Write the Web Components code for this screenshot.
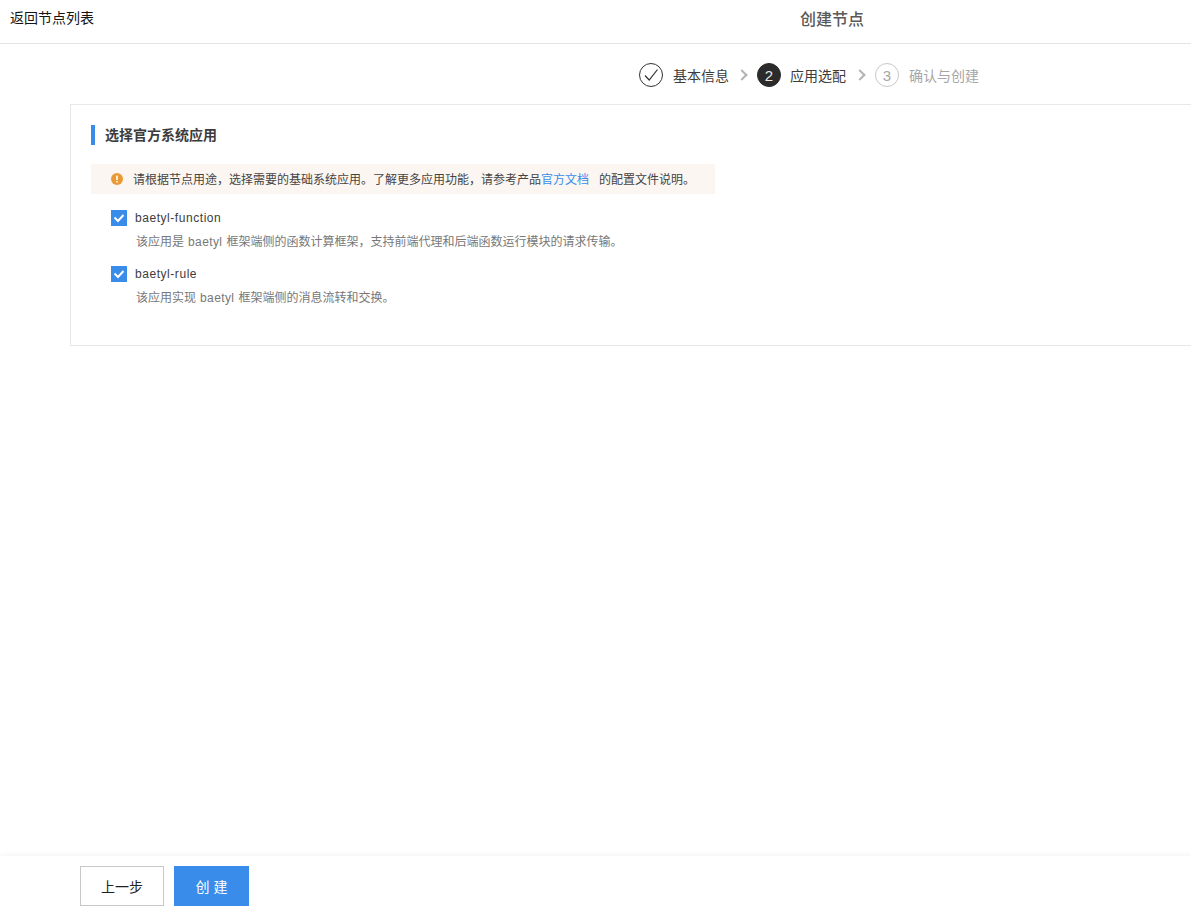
<!DOCTYPE html>
<html lang="zh">
<head>
<meta charset="utf-8">
<title>创建节点</title>
<style>
    html, body {
        margin: 0;
        height: 100%;
        overflow: hidden;
        background: #fff;
        font-family: "Liberation Sans", "Noto Sans CJK SC", sans-serif;
    }
</style>
</head>
<body>
<node-page>
    <page-header slot="header" back="返回节点列表" title-text="创建节点"></page-header>
    <step-bar slot="steps">
        <step-item state="done" label="基本信息"></step-item>
        <step-item state="active" num="2" label="应用选配"></step-item>
        <step-item state="todo" num="3" label="确认与创建"></step-item>
    </step-bar>
    <section-card slot="card" heading="选择官方系统应用">
        <notice-bar>请根据节点用途，选择需要的基础系统应用。了解更多应用功能，请参考产品<a>官方文档</a><span style="margin-left:10px">的配置文件说明。</span></notice-bar>
        <app-option name="baetyl-function">该应用是<b style="font-weight:400;letter-spacing:.4px;margin:0 4px">baetyl</b>框架端侧的函数计算框架，支持前端代理和后端函数运行模块的请求传输。</app-option>
        <app-option name="baetyl-rule">该应用实现<b style="font-weight:400;letter-spacing:.4px;margin:0 4px">baetyl</b>框架端侧的消息流转和交换。</app-option>
    </section-card>
    <page-footer slot="footer"></page-footer>
</node-page>

<script>
function defineEl(name, css, html, setup) {
    customElements.define(name, class extends HTMLElement {
        constructor() {
            super();
            this.attachShadow({ mode: 'open' });
            this.shadowRoot.innerHTML = `<style>${css}</style>${html}`;
        }
        connectedCallback() {
            if (setup) setup(this, this.shadowRoot);
        }
    });
}

defineEl('node-page', `
    :host { display: flex; flex-direction: column; height: 912px; width: 1191px; overflow: hidden; }
    .main { flex: 1; min-height: 0; }
`, `
    <slot name="header"></slot>
    <div class="main">
        <slot name="steps"></slot>
        <slot name="card"></slot>
    </div>
    <slot name="footer"></slot>
`);

defineEl('page-header', `
    :host { display: grid; grid-template-columns: 1fr auto 1fr; align-items: start; height: 43px; border-bottom: 1px solid #e4e4e4; box-sizing: content-box; }
    .back { padding: 10px 0 0 10px; font-size: 14px; line-height: 17px; color: #151515; }
    .title { padding: 10px 327px 0 0; grid-column: 3; text-align: right; font-size: 16px; line-height: 19px; font-weight: 500; color: #5a5a5a; white-space: nowrap; }
`, `
    <div class="back"></div>
    <div class="title"></div>
`, (el, root) => {
    root.querySelector('.back').textContent = el.getAttribute('back');
    root.querySelector('.title').textContent = el.getAttribute('title-text');
});

defineEl('step-bar', `
    :host { display: flex; justify-content: flex-end; align-items: center; height: 58px; padding: 2px 212px 0 0; }
`, `<slot></slot>`);

defineEl('step-item', `
    :host { display: flex; align-items: center; font-size: 14px; color: #3c3c3c; }
    :host(:not(:first-child))::before {
        content: "";
        width: 6px; height: 6px;
        margin: 0 11px 0 9px;
        border-top: 2px solid #b4b4b4;
        border-right: 2px solid #b4b4b4;
        transform: rotate(45deg);
    }
    :host([state="todo"])::before { margin-left: 10px !important; }
    .dot { width: 24px; height: 24px; box-sizing: border-box; border-radius: 50%; border: 1px solid #333; display: flex; align-items: center; justify-content: center; font-size: 15px; margin-right: 10px; }
    :host([state="active"]) .dot { background: #2b2b2b; border-color: #2b2b2b; color: #e8e8e8; margin-right: 9px; }
    :host([state="todo"]) { color: #a6a6a6; }
    :host([state="todo"]) .dot { border-color: #c8c8c8; color: #a6a6a6; }
    svg { width: 16px; height: 16px; display: block; }
`, `
    <span class="dot"></span><span class="label"></span>
`, (el, root) => {
    const dot = root.querySelector('.dot');
    if (el.getAttribute('state') === 'done') {
        dot.innerHTML = '<svg viewBox="0 0 16 16" fill="none" stroke="#333" stroke-width="1.2"><path d="M2 8.5 L6.2 13 L14.5 2.5"/></svg>';
    } else {
        dot.textContent = el.getAttribute('num');
    }
    root.querySelector('.label').textContent = el.getAttribute('label');
});

defineEl('section-card', `
    :host { display: block; margin-left: 70px; width: 1140px; height: 242px; box-sizing: border-box; border: 1px solid #e8e8e8; padding: 20px; }
    h2 { margin: 0 0 19px; height: 20px; border-left: 4px solid #398cea; padding-left: 10px; font-size: 14px; line-height: 20px; font-weight: 700; color: #3c3c3c; }
`, `
    <h2></h2>
    <slot></slot>
`, (el, root) => {
    root.querySelector('h2').textContent = el.getAttribute('heading');
});

defineEl('notice-bar', `
    :host { display: flex; align-items: center; width: 624px; height: 30px; box-sizing: border-box; background: #fbf6f2; padding-left: 20px; font-size: 12px; color: #444; margin-bottom: 16px; white-space: nowrap; }
    svg { width: 12px; height: 12px; margin-right: 11px; flex: none; }
    div { margin: -2px 0 0 -1px; }
    ::slotted(a) { color: #398cea; }
`, `
    <svg viewBox="0 0 12 12"><circle cx="6" cy="6" r="6" fill="#e99a35"/><rect x="5.2" y="2.6" width="1.6" height="4.4" fill="#fff"/><rect x="5.2" y="8" width="1.6" height="1.5" fill="#fff"/></svg>
    <div><slot></slot></div>
`);

defineEl('app-option', `
    :host { display: block; margin: 0 0 16px 20px; }
    .row { display: flex; align-items: center; height: 16px; font-size: 12px; color: #3c3c3c; letter-spacing: .55px; }
    .box { width: 16px; height: 16px; background: #398cea; margin-right: 8px; flex: none; }
    svg { display: block; width: 16px; height: 16px; }
    .desc { margin: 8px 0 0 25px; font-size: 12px; line-height: 16px; color: #777; white-space: nowrap; }
`, `
    <div class="row">
        <span class="box"><svg viewBox="0 0 16 16" fill="none" stroke="#fff" stroke-width="2"><path d="M3.5 7.5 L7 11 L12.5 5"/></svg></span>
        <span class="name"></span>
    </div>
    <div class="desc"><slot></slot></div>
`, (el, root) => {
    root.querySelector('.name').textContent = el.getAttribute('name');
});

defineEl('page-footer', `
    :host { display: flex; gap: 10px; height: 56px; box-sizing: border-box; padding: 10px 0 0 80px; box-shadow: 0 -2px 4px rgba(0,0,0,.04); }
    button { height: 40px; font: inherit; font-size: 14px; border-radius: 0; padding: 0; }
    .prev { width: 84px; background: #fff; border: 1px solid #c8c8c8; color: #222; }
    .go { width: 75px; background: #398cea; border: 0; color: #fff; }
`, `
    <button class="prev">上一步</button>
    <button class="go">创 建</button>
`);
</script>
</body>
</html>
